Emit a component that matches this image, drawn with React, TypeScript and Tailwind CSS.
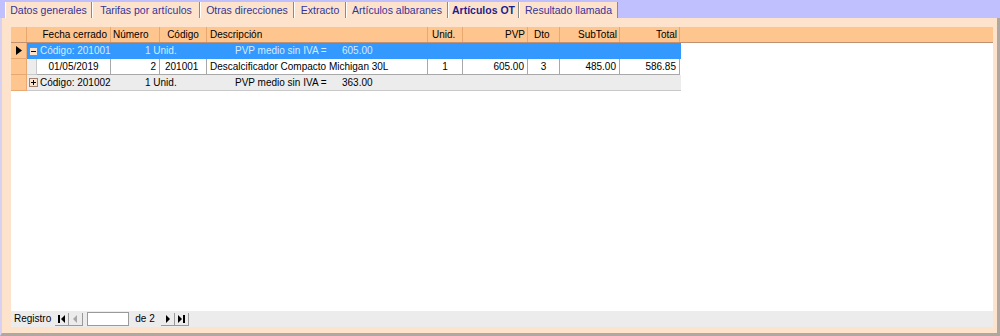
import React from "react";

type Col = { key: string; label: string; w: string; head: string; cell: string };

const cols: Col[] = [
  { key: "fecha", label: "Fecha cerrado", w: "w-[84px]", head: "justify-end pr-[3px]", cell: "justify-center" },
  { key: "numero", label: "Número", w: "w-[49px]", head: "justify-start pl-[2px]", cell: "justify-end pr-[3px]" },
  { key: "codigo", label: "Código", w: "w-[47px]", head: "justify-center", cell: "justify-start pl-[5px]" },
  { key: "desc", label: "Descripción", w: "w-[221px]", head: "justify-start pl-[3px]", cell: "justify-start pl-[3px]" },
  { key: "unid", label: "Unid.", w: "w-[35px]", head: "justify-start pl-[4px]", cell: "justify-center" },
  { key: "pvp", label: "PVP", w: "w-[65px]", head: "justify-end pr-[2px]", cell: "justify-end pr-[3px]" },
  { key: "dto", label: "Dto", w: "w-[32px]", head: "justify-start pl-[6px]", cell: "justify-center" },
  { key: "subtotal", label: "SubTotal", w: "w-[60px]", head: "justify-end pr-[2px]", cell: "justify-end pr-[3px]" },
  { key: "total", label: "Total", w: "w-[60px]", head: "justify-end pr-[2px]", cell: "justify-end pr-[3px]" },
];

const detail: Record<string, string> = {
  fecha: "01/05/2019",
  numero: "2",
  codigo: "201001",
  desc: "Descalcificador Compacto Michigan 30L",
  unid: "1",
  pvp: "605.00",
  dto: "3",
  subtotal: "485.00",
  total: "586.85",
};

const tabs = [
  { label: "Datos generales", w: "w-[87px]" },
  { label: "Tarifas por artículos", w: "w-[108px]" },
  { label: "Otras direcciones", w: "w-[94px]" },
  { label: "Extracto", w: "w-[52px]" },
  { label: "Artículos albaranes", w: "w-[102px]" },
  { label: "Artículos OT", w: "w-[71px]", active: true },
  { label: "Resultado llamada", w: "w-[99px]" },
];

const NavBtn = ({ kind, disabled }: { kind: "first" | "prev" | "next" | "last"; disabled?: boolean }) => {
  const c = disabled ? "#a8a8a8" : "#000";
  return (
    <div className="w-[14px] h-[13px] flex items-center justify-center border-b border-r border-[#9a9a9a]">
      <svg width="9" height="8" viewBox="0 0 9 8">
        {kind === "first" && (
          <>
            <rect x="1" y="0" width="2" height="8" fill={c} />
            <polygon points="8,0 8,8 4,4" fill={c} />
          </>
        )}
        {kind === "prev" && <polygon points="6,0 6,8 2,4" fill={c} />}
        {kind === "next" && <polygon points="3,0 3,8 7,4" fill={c} />}
        {kind === "last" && (
          <>
            <polygon points="1,0 1,8 5,4" fill={c} />
            <rect x="6" y="0" width="2" height="8" fill={c} />
          </>
        )}
      </svg>
    </div>
  );
};

const ExpandBox = ({ open }: { open: boolean }) => (
  <div className="w-[9px] h-[9px] bg-[#fde3cc] border border-[#a08070] flex items-center justify-center mr-[2px]">
    <svg width="7" height="7" viewBox="0 0 7 7">
      <rect x="1" y="3" width="5" height="1" fill="#000" />
      {!open && <rect x="3" y="1" width="1" height="5" fill="#000" />}
    </svg>
  </div>
);

const GroupRow = ({ open, code, price, selected }: { open: boolean; code: string; price: string; selected?: boolean }) => (
  <div
    className={
      "flex h-[16px] w-[654px] items-center " +
      (selected ? "bg-[#3399ff] text-[#d6ebff]" : "bg-[#ececec] text-black border-b border-[#c8c8c8]")
    }
  >
    <div className="w-[2px]" />
    <ExpandBox open={open} />
    <span className="w-[105px]">Código: {code}</span>
    <span className="w-[90px]">1 Unid.</span>
    <span className="w-[107px]">PVP medio sin IVA =</span>
    <span>{price}</span>
  </div>
);

export default function App() {
  return (
    <div
      className="w-[1000px] h-[336px] bg-[#c0c0ff] flex flex-col overflow-hidden text-[10px] leading-none"
      style={{ fontFamily: "'Liberation Sans', Arial, sans-serif" }}
    >
      {/* tabs */}
      <div className="h-[18px] flex items-end pl-[5px] text-[10.5px]">
        {tabs.map((t) => (
          <div
            key={t.label}
            className={
              "h-[16px] flex items-center justify-center pt-[1px] bg-[#fde3cc] border-r border-[#8a8a8a] border-l border-l-white " +
              t.w +
              (t.active ? " font-bold text-[#1e1e8c]" : " text-[#33339a]")
            }
          >
            {t.label}
          </div>
        ))}
      </div>

      {/* panel */}
      <div className="flex-1 bg-[#fde3cc] border-l-[2px] border-l-[#d8d0f0] border-r-[3px] border-r-[#b0a8a0] border-b-[3px] border-b-[#b0a8a0] pl-[9px] pr-[4px] pt-[9px] pb-[6px] flex flex-col">
        <div className="flex-1 bg-white flex flex-col">
          {/* header */}
          <div className="h-[16px] flex bg-[#ffc58f] border-b border-[#c09070]">
            <div className="w-[16px] border-r border-[#e8a870]" />
            {cols.map((c) => (
              <div key={c.key} className={"h-full flex items-center border-r border-[#e8a870] " + c.w + " " + c.head}>
                {c.label}
              </div>
            ))}
          </div>

          {/* row 1 - selected group */}
          <div className="flex h-[16px]">
            <div className="w-[16px] bg-[#ffc58f] border-r border-b border-[#e8a870] flex items-center justify-center">
              <svg width="6" height="9" viewBox="0 0 6 9">
                <polygon points="0,0 6,4.5 0,9" fill="#000" />
              </svg>
            </div>
            <GroupRow open code="201001" price="605.00" selected />
          </div>

          {/* row 2 - detail */}
          <div className="flex h-[16px]">
            <div className="w-[16px] bg-[#ffc58f] border-r border-b border-[#e8a870]" />
            <div className="w-[10px] bg-[#ececec] border-r border-b border-[#c8c8c8]" />
            {cols.map((c) => (
              <div
                key={c.key}
                className={
                  "h-full flex items-center border-r border-b border-[#a8a8a8] " +
                  (c.key === "fecha" ? "w-[74px] " : c.w + " ") +
                  c.cell
                }
              >
                {detail[c.key]}
              </div>
            ))}
          </div>

          {/* row 3 - collapsed group */}
          <div className="flex h-[16px]">
            <div className="w-[16px] bg-[#ffc58f] border-r border-b border-[#e8a870]" />
            <GroupRow open={false} code="201002" price="363.00" />
          </div>

          <div className="flex-1" />
        </div>

        {/* record navigation */}
        <div className="h-[16px] bg-[#ececec] flex items-center pl-[3px]">
          <span className="mr-[4px]">Registro</span>
          <NavBtn kind="first" />
          <NavBtn kind="prev" disabled />
          <div className="w-[42px] h-[14px] bg-white border border-[#9a9a9a] ml-[4px]" />
          <span className="ml-[6px] mr-[6px]">de 2</span>
          <NavBtn kind="next" />
          <NavBtn kind="last" />
        </div>
      </div>
    </div>
  );
}
